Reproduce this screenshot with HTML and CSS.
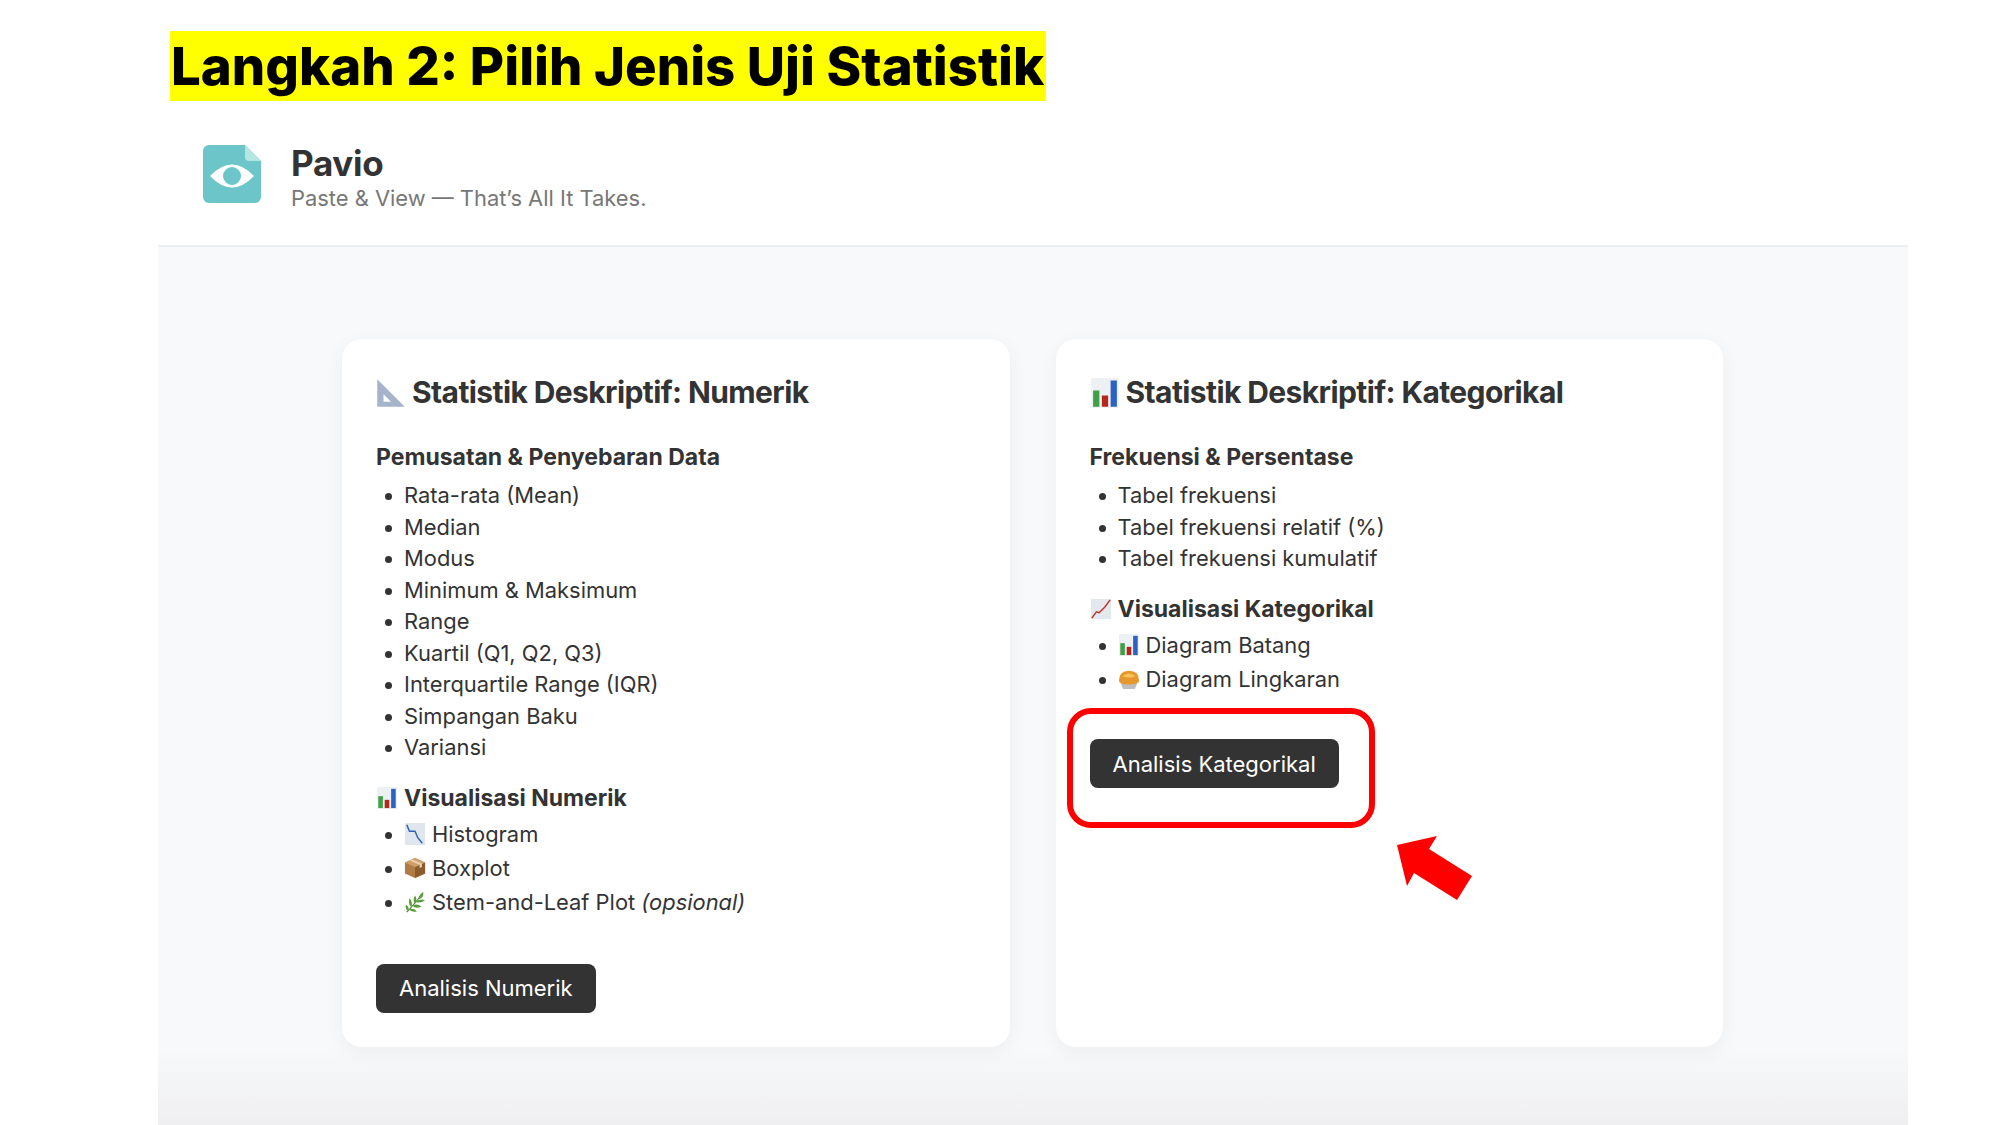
FILE: index.html
```html
<!DOCTYPE html>
<html lang="en">
<head>
    <meta charset="UTF-8">
    <meta name="viewport" content="width=device-width, initial-scale=1.0">
    <title>Langkah 2: Pilih Jenis Uji Statistik</title>
    <link rel="stylesheet" href="styles.css">
</head>
<body>
    <!-- Shared emoji drawings -->
    <svg class="defs" width="0" height="0">
        <symbol id="bars" viewBox="0 0 24 24">
            <rect x="1" y="0" width="22" height="24" fill="#eef1f4"/>
            <rect x="2.5" y="10" width="5" height="13" fill="#3fa045"/>
            <rect x="9.5" y="14" width="5" height="9" fill="#b5261c"/>
            <rect x="16.5" y="2" width="5" height="21" fill="#2a63c4"/>
        </symbol>
        <symbol id="ruler" viewBox="0 0 24 24">
            <path d="M1 1 L23 23 H1 Z M6 13 V19 H12 Z" fill="#a5b4cb" fill-rule="evenodd"/>
        </symbol>
        <symbol id="down" viewBox="0 0 24 24">
            <rect x="1" y="0" width="22" height="24" fill="#dfe6ee"/>
            <path d="M3 2 L6 9 H12 L15 16 L20 22" fill="none" stroke="#2f62b5" stroke-width="1.6"/>
        </symbol>
        <symbol id="up" viewBox="0 0 24 24">
            <rect x="1" y="1" width="22" height="22" fill="#e3e8ee"/>
            <path d="M2 22 L7 15 L10 16 L16 10 L22 2" fill="none" stroke="#c4302b" stroke-width="1.6"/>
        </symbol>
        <symbol id="box" viewBox="0 0 24 24">
            <path d="M12 1 L23 6 V18 L12 23 L1 18 V6 Z" fill="#b07b45"/>
            <path d="M12 11 L23 6 V18 L12 23 Z" fill="#8c5c2d"/>
            <path d="M12 1 L23 6 L12 11 L1 6 Z" fill="#cfa06c"/>
            <path d="M6 3.5 L17 8.5 V12 L19.5 11 V7 L8.5 2.4 Z" fill="#e8d2b2"/>
        </symbol>
        <symbol id="herb" viewBox="0 0 24 24">
            <path d="M3 23 Q9 17 20 3" fill="none" stroke="#4c8a35" stroke-width="1.3"/>
            <path d="M21 1 Q22 7 16 9 Q16 4 21 1 Z M12 5 Q15 9 12 14 Q9 10 12 5 Z M23 10 Q18 14 13 12 Q17 8 23 10 Z M6 8 Q10 12 8 18 Q4 14 6 8 Z M19 17 Q13 20 9 16 Q14 13 19 17 Z M2 15 Q6 17 5 22 Q1 20 2 15 Z M14 22 Q9 24 5 20 Q10 18 14 22 Z" fill="#5b9c3c"/>
        </symbol>
        <symbol id="pie" viewBox="0 0 24 24">
            <path d="M2.5 15 H21.5 L18.5 23 H5.5 Z" fill="#bdbdbd"/>
            <path d="M1 14 Q1 3 12 3 Q23 3 23 14 Q23 18 12 18 Q1 18 1 14 Z" fill="#e8962e"/>
            <path d="M5 9 Q12 3 19 9 Q12 12 5 9 Z" fill="#f5c45e"/>
        </symbol>
    </svg>

    <div class="slide">
        <h1 class="slide-title"><span>Langkah 2: Pilih Jenis Uji Statistik</span></h1>

        <div class="page">
            <header class="brand">
                <svg class="brand-logo" viewBox="0 0 58 58">
                    <path d="M6 0 H42 L58 16 V52 a6 6 0 0 1 -6 6 H6 a6 6 0 0 1 -6 -6 V6 a6 6 0 0 1 6 -6 Z" fill="#6cc5c8"/>
                    <path d="M42 0 L58 16 H46 a4 4 0 0 1 -4 -4 Z" fill="#b4e6e2"/>
                    <path d="M7 31 Q29 8 51 31 Q29 54 7 31 Z" fill="#fff"/>
                    <circle cx="29" cy="31" r="9" fill="#6cc5c8"/>
                </svg>
                <div class="brand-text">
                    <div class="brand-name">Pavio</div>
                    <div class="brand-tag">Paste &amp; View — That’s All It Takes.</div>
                </div>
            </header>

            <main class="panel">
                <div class="cards">
                    <section class="card">
                        <h2><svg class="emoji-title"><use href="#ruler"/></svg>Statistik Deskriptif: Numerik</h2>
                        <h3>Pemusatan &amp; Penyebaran Data</h3>
                        <ul>
                            <li>Rata-rata (Mean)</li>
                            <li>Median</li>
                            <li>Modus</li>
                            <li>Minimum &amp; Maksimum</li>
                            <li>Range</li>
                            <li>Kuartil (Q1, Q2, Q3)</li>
                            <li>Interquartile Range (IQR)</li>
                            <li>Simpangan Baku</li>
                            <li>Variansi</li>
                        </ul>
                        <h3 class="sub"><svg class="emoji"><use href="#bars"/></svg>Visualisasi Numerik</h3>
                        <ul class="tall">
                            <li><svg class="emoji"><use href="#down"/></svg>Histogram</li>
                            <li><svg class="emoji"><use href="#box"/></svg>Boxplot</li>
                            <li><svg class="emoji"><use href="#herb"/></svg>Stem-and-Leaf Plot <em>(opsional)</em></li>
                        </ul>
                        <button class="button first">Analisis Numerik</button>
                    </section>

                    <section class="card">
                        <h2><svg class="emoji-title"><use href="#bars"/></svg>Statistik Deskriptif: Kategorikal</h2>
                        <h3>Frekuensi &amp; Persentase</h3>
                        <ul>
                            <li>Tabel frekuensi</li>
                            <li>Tabel frekuensi relatif (%)</li>
                            <li>Tabel frekuensi kumulatif</li>
                        </ul>
                        <h3 class="sub"><svg class="emoji"><use href="#up"/></svg>Visualisasi Kategorikal</h3>
                        <ul class="tall">
                            <li><svg class="emoji"><use href="#bars"/></svg>Diagram Batang</li>
                            <li><svg class="emoji"><use href="#pie"/></svg>Diagram Lingkaran</li>
                        </ul>
                        <button class="button second">Analisis Kategorikal</button>
                    </section>
                </div>
            </main>
        </div>

        <!-- Annotations drawn on top of the screenshot -->
        <div class="callout"></div>
        <svg class="arrow" viewBox="0 0 80 70">
            <path d="M2 9 L42 0 L34 13 L77 40 L62 64 L19 37 L12 50 Z" fill="#ff0000"/>
        </svg>
    </div>
</body>
</html>
```
FILE: styles.css
```css
/* Basic styling */
* { box-sizing: border-box; }
body { margin: 0; background: #fff; font-family: "Inter", "Liberation Sans", sans-serif; color: #333; }
.defs { position: absolute; }
.slide { position: relative; width: 2000px; height: 1125px; overflow: hidden; padding: 31px 92px 0 158px; }

.slide-title { margin: 0 0 0 12px; font: 800 52.7px/70px "Inter", sans-serif; color: #000; }
.slide-title span { display: inline-block; background: #ffff00; height: 70px; padding: 0 2px 0 1px; }

/* Screenshot area */
.page { height: 1024px; }
.brand { display: flex; align-items: center; gap: 30px; height: 146px; padding: 2px 0 0 45px; border-bottom: 2px solid #eceef0; }
.brand-logo { width: 58px; height: 58px; }
.brand-text { margin-top: 6px; }
.brand-name { font-size: 35px; font-weight: 700; line-height: 42px; letter-spacing: -0.3px; }
.brand-tag { font-size: 21.9px; line-height: 28px; color: #777; }

.panel { height: 878px; padding: 92px 0 0 184px; background: linear-gradient(#f8f9fb 0, #f8f9fb 800px, #efeff1 878px); }
.cards { display: grid; grid-template-columns: 667.5px 667.5px; gap: 46px; }
.card { background: #fff; border-radius: 20px; padding: 35px 34px 34px; height: 708px; box-shadow: 0 5px 20px rgba(0,0,0,0.05); }

h2 { margin: 0; font-size: 30px; font-weight: 700; line-height: 36px; letter-spacing: -0.6px; }
h3 { margin: 33px 0 0; font-size: 23px; font-weight: 700; line-height: 28px; }
h3.sub { margin-top: 20px; }
ul { margin: 9px 0 0; padding: 0 0 0 28px; list-style: none; font-size: 21.9px; line-height: 31.5px; }
ul.tall { margin-top: 5px; line-height: 34.4px; }
li::before { content: ""; display: inline-block; width: 7px; height: 7px; margin: 0 12px 0 -19px; border-radius: 50%; background: #333; vertical-align: 3px; }

.emoji-title { width: 30px; height: 30px; margin-right: 6px; vertical-align: -5px; }
.emoji { width: 22px; height: 22px; margin-right: 6px; vertical-align: -3px; }

.button { display: block; height: 49px; padding: 0 23px; border: none; border-radius: 8px; background: #333; color: #fff; font: 400 22px "Inter", sans-serif; cursor: pointer; }
.button.first { margin-top: 44px; }
.button.second { margin-top: 43px; }

/* Annotations */
.callout { position: absolute; left: 1067px; top: 708px; width: 308px; height: 120px; border: 6px solid #ff0000; border-radius: 24px; }
.arrow { position: absolute; left: 1395px; top: 836px; width: 80px; height: 70px; }
```
